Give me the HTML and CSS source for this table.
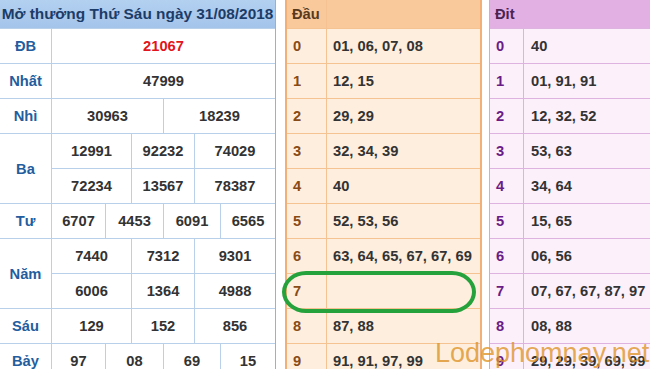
FILE: index.html
```html
<!DOCTYPE html>
<html lang="vi">
<head>
<meta charset="utf-8">
<title>Kết quả xổ số</title>
<link rel="stylesheet" href="styles.css">
</head>
<body>
<div class="page">
  <div class="kq">
    <div class="kq-head">Mở thưởng Thứ Sáu ngày 31/08/2018</div>

    <div class="lbl">ĐB</div>
    <div class="num red c-all">21067</div>

    <div class="lbl">Nhất</div>
    <div class="num c-all">47999</div>

    <div class="lbl">Nhì</div>
    <div class="num h1">30963</div>
    <div class="num h2">18239</div>

    <div class="lbl span2">Ba</div>
    <div class="num t1">12991</div>
    <div class="num t2">92232</div>
    <div class="num t3">74029</div>
    <div class="num t1">72234</div>
    <div class="num t2">13567</div>
    <div class="num t3">78387</div>

    <div class="lbl">Tư</div>
    <div class="num q1">6707</div>
    <div class="num q2">4453</div>
    <div class="num q3">6091</div>
    <div class="num q4">6565</div>

    <div class="lbl span2">Năm</div>
    <div class="num t1">7440</div>
    <div class="num t2">7312</div>
    <div class="num t3">9301</div>
    <div class="num t1">6006</div>
    <div class="num t2">1364</div>
    <div class="num t3">4988</div>

    <div class="lbl">Sáu</div>
    <div class="num t1">129</div>
    <div class="num t2">152</div>
    <div class="num t3">856</div>

    <div class="lbl">Bảy</div>
    <div class="num q1">97</div>
    <div class="num q2">08</div>
    <div class="num q3">69</div>
    <div class="num q4">15</div>
  </div>

  <div class="lt dau">
    <div class="lt-head">Đầu</div><div class="lt-head"></div>
    <div class="k">0</div><div class="v">01, 06, 07, 08</div>
    <div class="k">1</div><div class="v">12, 15</div>
    <div class="k">2</div><div class="v">29, 29</div>
    <div class="k">3</div><div class="v">32, 34, 39</div>
    <div class="k">4</div><div class="v">40</div>
    <div class="k">5</div><div class="v">52, 53, 56</div>
    <div class="k">6</div><div class="v">63, 64, 65, 67, 67, 69</div>
    <div class="k">7</div><div class="v"></div>
    <div class="k">8</div><div class="v">87, 88</div>
    <div class="k">9</div><div class="v">91, 91, 97, 99</div>
  </div>

  <div class="lt dit">
    <div class="lt-head">Đit</div><div class="lt-head"></div>
    <div class="k">0</div><div class="v">40</div>
    <div class="k">1</div><div class="v">01, 91, 91</div>
    <div class="k">2</div><div class="v">12, 32, 52</div>
    <div class="k">3</div><div class="v">53, 63</div>
    <div class="k">4</div><div class="v">34, 64</div>
    <div class="k">5</div><div class="v">15, 65</div>
    <div class="k">6</div><div class="v">06, 56</div>
    <div class="k">7</div><div class="v">07, 67, 67, 87, 97</div>
    <div class="k">8</div><div class="v">08, 88</div>
    <div class="k">9</div><div class="v">29, 29, 39, 69, 99</div>
  </div>

  <div class="mark"></div>
  <div class="watermark">Lodephomnay.net</div>
</div>
</body>
</html>
```

FILE: styles.css
```css
* { box-sizing: border-box; }
html, body { margin: 0; padding: 0; background: #fff; }
body {
  font-family: "Liberation Sans", Arial, sans-serif;
  font-weight: bold;
  font-size: 14.7px;
  color: #333;
}
.page {
  position: relative;
  width: 650px;
  height: 369px;
  overflow: hidden;
  display: flex;
  align-items: flex-start;
}

/* Left results table */
.kq {
  flex: none;
  width: 276px;
  display: grid;
  grid-template-columns: 51px 53px 25px 31px 30px 25px 54px;
  grid-template-rows: 28px repeat(10, 34px);
  gap: 1px;
  background: #b9d0ea;
  border-right: 1px solid #8fb2de;
}
.kq > div {
  display: flex;
  align-items: center;
  justify-content: center;
  background: #fff;
}
.kq .kq-head {
  grid-column: 1 / -1;
  background: linear-gradient(#b3d0f0, #a4c4ea);
  color: #1c3c68;
  font-size: 15.4px;
}
.kq .lbl { grid-column: 1; color: #235d9e; }
.kq .span2 { grid-row: span 2; }
.red { color: #e3151c; }
.c-all { grid-column: 2 / -1; }
.h1 { grid-column: 2 / 5; }
.h2 { grid-column: 5 / 8; }
.t1 { grid-column: 2 / 4; }
.t2 { grid-column: 4 / 6; }
.t3 { grid-column: 6 / 8; }
.q1 { grid-column: 2 / 3; }
.q2 { grid-column: 3 / 5; }
.q3 { grid-column: 5 / 7; }
.q4 { grid-column: 7 / 8; }

/* Loto tables */
.lt {
  flex: none;
  display: grid;
  grid-template-rows: 28px repeat(10, 34px);
  gap: 1px;
}
.lt > div {
  display: flex;
  align-items: center;
}
.lt .k { padding-left: 6px; }
.lt .v { padding-left: 6px; color: #333; }

.dau {
  margin-left: 9px;
  width: 197px;
  grid-template-columns: 39px 153px;
  background: #f5c391;
  border-left: 2px solid #f2b077;
  border-right: 2px solid #f2b077;
}
.dau > div { background: #fdeede; }
.dau .lt-head { background: #f9c99c; color: #5a3a1c; padding-left: 5px; }
.dau .k { color: #8a4a14; }

.dit {
  margin-left: 7px;
  width: 168px;
  grid-template-columns: 33px 133px;
  background: #dfb3df;
  border-left: 1px solid #d9a6d9;
}
.dit > div { background: #fcf0fb; }
.dit .lt-head { background: #e3b0e3; color: #4b2350; padding-left: 5px; }
.dit .k { color: #6a1c86; }
.dit .v { padding-left: 7px; }

/* Overlays */
.mark {
  position: absolute;
  left: 282px;
  top: 271px;
  width: 194px;
  height: 42px;
  border: 4px solid #26a23c;
  border-radius: 24px / 21px;
}
.watermark {
  position: absolute;
  left: 435px;
  top: 340px;
  font-family: "Liberation Sans", Arial, sans-serif;
  font-weight: normal;
  font-size: 27px;
  line-height: 27px;
  color: rgba(222, 148, 40, 0.8);
  white-space: nowrap;
}
```
